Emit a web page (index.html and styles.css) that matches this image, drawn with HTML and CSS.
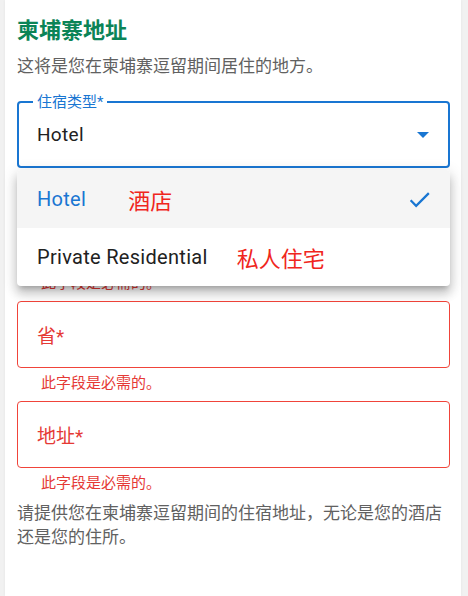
FILE: index.html
```html
<!DOCTYPE html>
<html lang="zh-CN">
<head>
<meta charset="utf-8">
<title>柬埔寨地址</title>
<link rel="stylesheet" href="styles.css">
</head>
<body>
<main class="card">
  <h1 class="title">柬埔寨地址</h1>
  <p class="subtitle">这将是您在柬埔寨逗留期间居住的地方。</p>
  <div class="form">
    <div class="group">
      <div class="field select">
        <span class="float-label">住宿类型*</span>
        <span class="value">Hotel</span>
        <span class="arrow"></span>
      </div>
      <div class="helper"></div>
    </div>
    <div class="group">
      <div class="field error"></div>
      <div class="helper">此字段是必需的。</div>
    </div>
    <div class="group">
      <div class="field error"><span class="placeholder">省*</span></div>
      <div class="helper">此字段是必需的。</div>
    </div>
    <div class="group">
      <div class="field error"><span class="placeholder">地址*</span></div>
      <div class="helper">此字段是必需的。</div>
    </div>
    <ul class="menu">
      <li class="option selected">
        <span class="opt-en">Hotel</span>
        <span class="opt-zh zh-hotel">酒店</span>
        <svg class="check" viewBox="0 0 24 24" aria-hidden="true"><path d="M9 16.17L4.83 12l-1.42 1.41L9 19 21 7l-1.41-1.41z"/></svg>
      </li>
      <li class="option">
        <span class="opt-en">Private Residential</span>
        <span class="opt-zh zh-private">私人住宅</span>
      </li>
    </ul>
  </div>
  <p class="note">请提供您在柬埔寨逗留期间的住宿地址，无论是您的酒店还是您的住所。</p>
</main>
</body>
</html>
```

FILE: styles.css
```css
html, body {
  margin: 0;
  padding: 0;
}
body {
  background: #f1f1f1;
  font-family: Roboto, "Noto Sans CJK SC", sans-serif;
  color: #212121;
}
.card {
  margin: 0 7px 0 5px;
  min-height: 596px;
  box-sizing: border-box;
  background: #ffffff;
  padding: 18px 11px 0 12px;
  box-shadow: 0 0 3px rgba(0, 0, 0, 0.06);
}
.title {
  margin: 0;
  font-size: 22px;
  line-height: 26px;
  font-weight: 700;
  color: #0b8457;
}
.subtitle {
  margin: 10px 0 0;
  font-size: 17px;
  line-height: 24px;
  color: #616161;
}
.form {
  position: relative;
  margin-top: 23px;
}
.field {
  position: relative;
  box-sizing: border-box;
  height: 67px;
  border: 1px solid #f0443a;
  border-radius: 4px;
  padding: 0 19px;
  display: flex;
  align-items: center;
}
.field.select {
  border: 2px solid #1976d2;
  padding: 0 18px;
}
.float-label {
  position: absolute;
  left: 14px;
  top: -11px;
  padding: 0 4px;
  background: #ffffff;
  font-size: 15px;
  line-height: 20px;
  color: #1976d2;
}
.value {
  font-size: 19px;
  letter-spacing: 0.3px;
  color: #212121;
}
.arrow {
  margin-left: auto;
  margin-right: 1px;
  width: 0;
  height: 0;
  border-left: 6px solid transparent;
  border-right: 6px solid transparent;
  border-top: 6px solid #1976d2;
}
.placeholder {
  font-size: 19px;
  color: #e53935;
}
.helper {
  box-sizing: border-box;
  height: 33px;
  padding: 5px 0 0 24px;
  font-size: 15px;
  line-height: 20px;
  color: #e53935;
}
.menu {
  position: absolute;
  left: 0;
  right: 0;
  top: 69px;
  margin: 0;
  padding: 0;
  list-style: none;
  background: #ffffff;
  border-radius: 4px;
  overflow: hidden;
  box-shadow: 0 5px 5px -3px rgba(0, 0, 0, 0.2), 0 8px 10px 1px rgba(0, 0, 0, 0.14), 0 3px 14px 2px rgba(0, 0, 0, 0.12);
}
.option {
  height: 58px;
  display: flex;
  align-items: center;
  padding: 0 17px 0 20px;
}
.option.selected {
  background: #f5f5f5;
}
.opt-en {
  font-size: 20px;
  letter-spacing: 0.3px;
  color: #212121;
}
.option.selected .opt-en {
  color: #1976d2;
}
.opt-zh {
  font-size: 22px;
  color: #f0261d;
}
.zh-hotel {
  margin-left: 42px;
}
.zh-private {
  margin-left: 29px;
}
.check {
  margin-left: auto;
  width: 27px;
  height: 27px;
  fill: #1976d2;
}
.note {
  margin: 0;
  font-size: 17px;
  line-height: 24px;
  color: #616161;
}
```
